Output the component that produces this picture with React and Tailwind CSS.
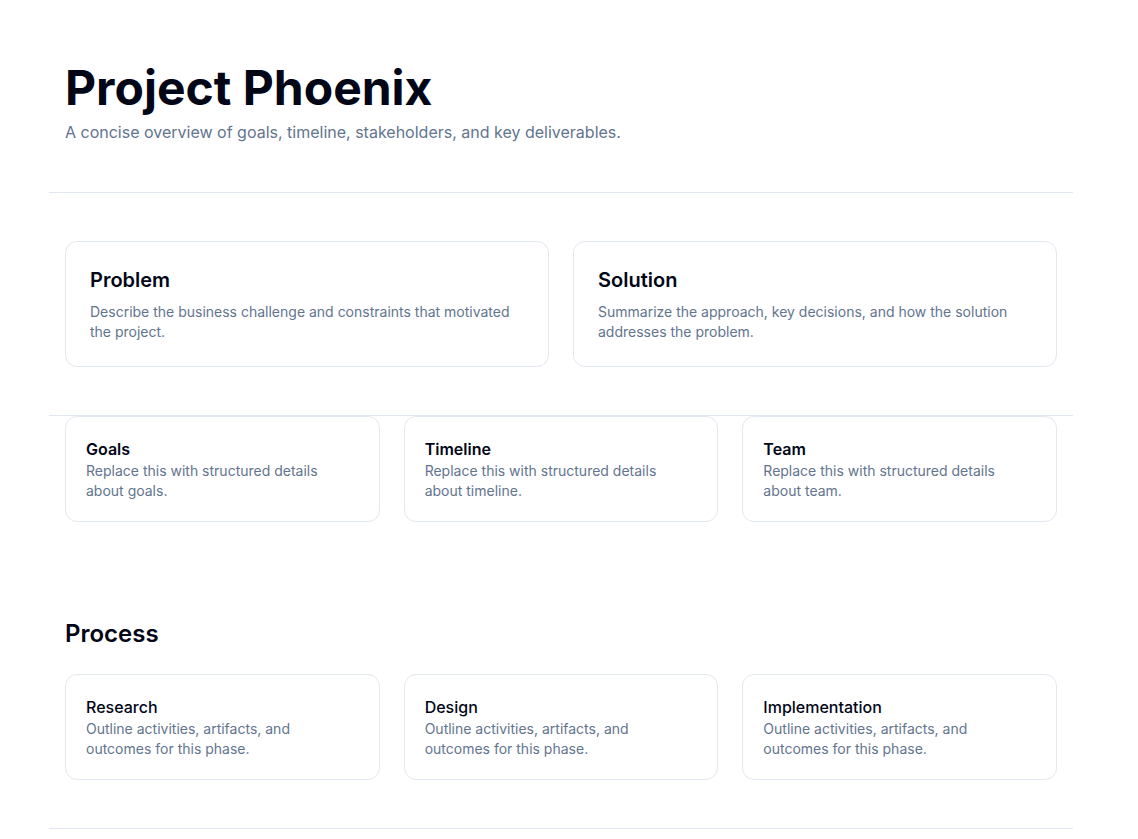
const overview = [
  {
    title: "Problem",
    body: "Describe the business challenge and constraints that motivated the project.",
  },
  {
    title: "Solution",
    body: "Summarize the approach, key decisions, and how the solution addresses the problem.",
  },
];

const facts = ["Goals", "Timeline", "Team"];

const phases = ["Research", "Design", "Implementation"];

export default function App() {
  return (
    <div className="min-h-screen bg-white text-slate-900 font-['Inter',_'Liberation_Sans',_sans-serif]">
      {/* leave room the way a scrollbar would */}
      <div className="pr-[16px]">
        {/* Header */}
        <header className="max-w-5xl mx-auto px-4 pt-16 pb-12 border-b border-slate-200">
          <h1 className="text-5xl font-bold text-[#020617]">Project Phoenix</h1>
          <p className="mt-2 text-base text-slate-500">
            A concise overview of goals, timeline, stakeholders, and key deliverables.
          </p>
        </header>

        {/* Problem / Solution */}
        <section className="max-w-5xl mx-auto px-4 py-12 border-b border-slate-200">
          <div className="grid grid-cols-2 gap-6">
            {overview.map((item) => (
              <div key={item.title} className="rounded-xl border border-slate-200 p-6">
                <h2 className="text-xl font-semibold text-[#020617]">{item.title}</h2>
                <p className="mt-2 text-sm text-slate-500">{item.body}</p>
              </div>
            ))}
          </div>
        </section>

        {/* Quick facts */}
        <section className="max-w-5xl mx-auto px-4 pb-12">
          <div className="grid grid-cols-3 gap-6">
            {facts.map((f) => (
              <div key={f} className="rounded-xl border border-slate-200 p-5">
                <h3 className="text-base font-semibold text-[#020617]">{f}</h3>
                <p className="text-sm text-slate-500 pr-8">
                  Replace this with structured details about {f.toLowerCase()}.
                </p>
              </div>
            ))}
          </div>
        </section>

        {/* Process */}
        <section className="max-w-5xl mx-auto px-4 py-12 border-b border-slate-200">
          <h2 className="text-2xl font-semibold text-[#020617] mb-6">Process</h2>
          <div className="grid grid-cols-3 gap-6">
            {phases.map((p) => (
              <div key={p} className="rounded-xl border border-slate-200 p-5">
                <h3 className="text-base font-medium text-[#020617]">{p}</h3>
                <p className="text-sm text-slate-500 pr-16">
                  Outline activities, artifacts, and outcomes for this phase.
                </p>
              </div>
            ))}
          </div>
        </section>

        {/* Outcomes */}
        <section className="max-w-5xl mx-auto px-4 py-12">
          <h2 className="text-2xl font-semibold text-[#020617] mb-6">Outcomes</h2>
          <div className="rounded-xl border border-slate-200 p-6">
            <p className="text-sm text-slate-500">
              Summarize measurable results, lessons learned, and next steps.
            </p>
          </div>
        </section>
      </div>
    </div>
  );
}
